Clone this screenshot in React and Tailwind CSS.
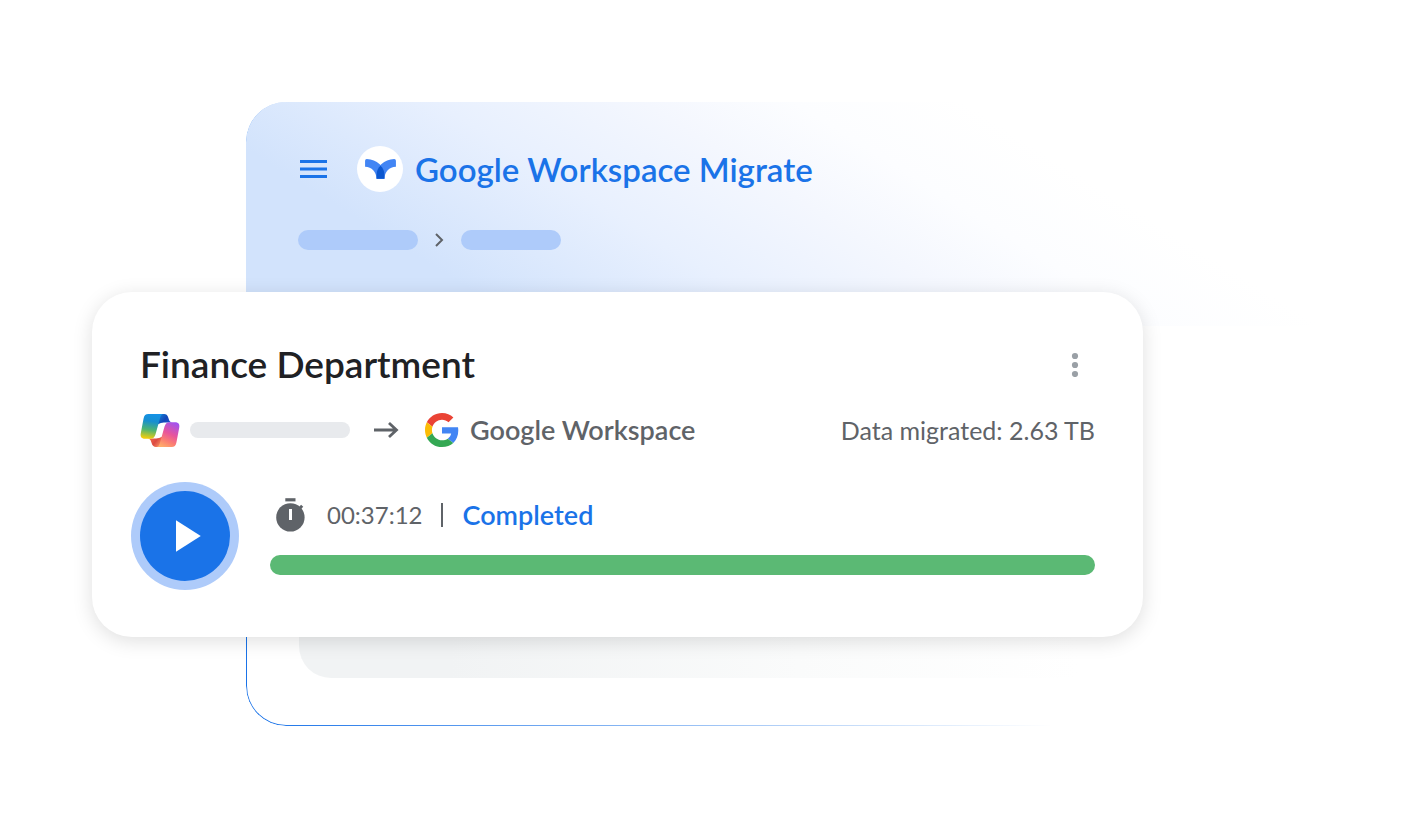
import React from "react";

const CopilotIcon = () => (
  <svg viewBox="32 39 116 102" className="w-10 h-[35px] shrink-0" role="img" aria-label="Copilot">
    <defs>
      <linearGradient id="leftRibbon" x1="0.55" y1="0" x2="0.4" y2="1">
        <stop offset="0" stopColor="#1592e6" />
        <stop offset="0.3" stopColor="#178fd0" />
        <stop offset="0.65" stopColor="#4fb570" />
        <stop offset="1" stopColor="#f2cd0c" />
      </linearGradient>
      <linearGradient id="leftFold" x1="0" y1="0" x2="1" y2="0.6">
        <stop offset="0" stopColor="#1784d8" />
        <stop offset="0.6" stopColor="#1247b8" />
        <stop offset="1" stopColor="#2052cb" />
      </linearGradient>
      <linearGradient id="rightRibbon" x1="0.75" y1="0" x2="0.3" y2="1">
        <stop offset="0" stopColor="#a253ee" />
        <stop offset="0.45" stopColor="#e8559c" />
        <stop offset="0.75" stopColor="#fb7f72" />
        <stop offset="1" stopColor="#ffab6b" />
      </linearGradient>
      <linearGradient id="rightFold" x1="0" y1="0" x2="1" y2="0.6">
        <stop offset="0" stopColor="#f9744e" />
        <stop offset="0.6" stopColor="#dc4a42" />
        <stop offset="1" stopColor="#f58a60" />
      </linearGradient>
    </defs>
    <path d="M84 42H102Q111 42 114 52L117 61Q119 66 125 67H104Q94 66 84 72Z" fill="url(#leftFold)" />
    <path d="M96 138H78Q69 138 66 128L63 119Q61 114 55 113H76Q86 114 96 108Z" fill="url(#rightFold)" />
    <path
      d="M56 42H100C94 42 91 50 89 58L77 101C74 110 70 114 62 114H46C36 114 32 108 34 98L42 56C44 46 48 42 56 42Z"
      fill="url(#leftRibbon)"
    />
    <path
      d="M124 138H80C86 138 89 130 91 122L103 79C106 70 110 66 118 66H134C144 66 148 72 146 82L138 124C136 134 132 138 124 138Z"
      fill="url(#rightRibbon)"
    />
  </svg>
);

const GoogleIcon = () => (
  <svg viewBox="0 0 48 48" className="size-[34px] shrink-0" role="img" aria-label="Google">
    <path fill="#EA4335" d="M24 9.5c3.54 0 6.71 1.22 9.21 3.6l6.85-6.85C35.9 2.38 30.47 0 24 0 14.62 0 6.51 5.38 2.56 13.22l7.98 6.19C12.43 13.72 17.74 9.5 24 9.5z" />
    <path fill="#4285F4" d="M46.98 24.55c0-1.57-.15-3.09-.38-4.55H24v9.02h12.94c-.58 2.96-2.26 5.48-4.78 7.18l7.73 6c4.51-4.18 7.09-10.36 7.09-17.65z" />
    <path fill="#FBBC05" d="M10.53 28.59c-.48-1.45-.76-2.99-.76-4.59s.27-3.14.76-4.59l-7.98-6.19C.92 16.46 0 20.12 0 24c0 3.88.92 7.54 2.56 10.78l7.97-6.19z" />
    <path fill="#34A853" d="M24 48c6.48 0 11.93-2.13 15.89-5.81l-7.73-6c-2.15 1.45-4.92 2.3-8.16 2.3-6.26 0-11.57-4.22-13.47-9.91l-7.98 6.19C6.51 42.62 14.62 48 24 48z" />
  </svg>
);

const MigrateLogo = () => (
  <span className="size-[46px] rounded-full bg-white flex items-center justify-center shrink-0">
    <svg viewBox="60 74 91 59" className="w-[31px] h-5" aria-hidden="true">
      <path d="M65 74Q60 74 60 79V97C80 98 93 112 94 132H117V118C117 96 95 76 65 74Z" fill="#4285f4" />
      <path d="M146 74Q151 74 151 79V97C131 98 118 112 117 132H94V118C94 96 116 76 146 74Z" fill="#4285f4" />
      <path d="M105.5 94C113 101 117 109 117 120V132H94V120C94 109 98 101 105.5 94Z" fill="#0b57d0" />
    </svg>
  </span>
);

const TimerIcon = () => (
  <svg viewBox="0 0 30 34" className="w-[30px] h-[34px] shrink-0" aria-hidden="true">
    <path d="M9.3 0.2h10.2v3.2H9.3z" fill="#5f6368" />
    <path d="M23 11l3.2-3.2" stroke="#5f6368" strokeWidth="3" />
    <circle cx="14.4" cy="19.4" r="14.2" fill="#5f6368" />
    <path d="M13 11h3v11h-3z" fill="#fff" />
  </svg>
);

const AppHeader = () => (
  <header className="relative h-56 rounded-tl-[40px] pl-[52px] pt-11 bg-[linear-gradient(32deg,#d2e3fc_0px,#d2e3fc_150px,#e8f0fe_290px,#f4f7fe_400px,#fcfdff_480px,#ffffff_570px)]">
    <div className="flex items-center">
      <button type="button" aria-label="Main menu" className="ml-0.5 mr-[30px]">
        <svg viewBox="0 0 27 20" className="w-[27px] h-5" aria-hidden="true">
          <path d="M0 2.5h27M0 10h27M0 17.5h27" stroke="#1a73e8" strokeWidth="3" />
        </svg>
      </button>
      <MigrateLogo />
      <h1 className="ml-3 text-[33px] leading-[44px] font-semibold text-[#1a73e8] whitespace-nowrap">
        Google Workspace Migrate
      </h1>
    </div>
    <div className="mt-[38px] flex items-center">
      <span className="w-[120px] h-5 rounded-full bg-[#aecbfa]" />
      <svg viewBox="0 0 11 14" className="w-[11px] h-3.5 mx-4" aria-hidden="true">
        <path d="M2 1L8 7L2 13" fill="none" stroke="#5f6368" strokeWidth="2" />
      </svg>
      <span className="w-[100px] h-5 rounded-full bg-[#aecbfa]" />
    </div>
  </header>
);

const AppWindow = () => (
  <section className="col-start-1 row-start-1 relative ml-[246px] flex flex-col">
    {/* outline that fades out to the right */}
    <div
      aria-hidden="true"
      className="absolute inset-0 rounded-l-[40px] border-l border-b border-[#1a73e8] [mask-image:linear-gradient(to_right,black,transparent_69%)]"
    />
    <AppHeader />
    <div className="relative flex-1 ml-[53px] mb-12 rounded-bl-[32px] bg-[linear-gradient(to_right,#f1f3f4_0px,#f1f3f4_150px,#fafbfb_500px,#ffffff_780px)]" />
  </section>
);

const MigrationCard = () => (
  <article className="col-start-1 row-start-1 relative ml-[92px] mr-[271px] mt-[190px] mb-[89px] px-12 pt-[50px] pb-14 rounded-[40px] bg-white shadow-[0_4px_20px_rgba(0,0,0,0.13)]">
    <div className="flex items-center justify-between">
      <h2 className="text-[37px] leading-[44px] font-semibold text-[#202124]">Finance Department</h2>
      <button type="button" aria-label="More options" className="mr-4">
        <svg viewBox="0 0 8 26" className="w-2 h-[26px]" aria-hidden="true">
          <circle cx="4" cy="5" r="3.1" fill="#9aa0a6" />
          <circle cx="4" cy="14" r="3.1" fill="#9aa0a6" />
          <circle cx="4" cy="23" r="3.1" fill="#9aa0a6" />
        </svg>
      </button>
    </div>

    <div className="mt-[26px] flex items-center text-[27px] leading-9 text-[#5f6368] whitespace-nowrap">
      <CopilotIcon />
      <span className="ml-2.5 w-40 h-4 rounded-full bg-[#e8eaed]" />
      <svg viewBox="0 0 26 18" className="w-[26px] h-[18px] ml-6 mr-[25px]" aria-hidden="true">
        <path d="M0 9h23M15 2l7.5 7l-7.5 7" fill="none" stroke="#5f6368" strokeWidth="2.8" />
      </svg>
      <GoogleIcon />
      <span className="ml-[11px] font-semibold">Google Workspace</span>
      <span className="ml-auto text-[25px]">Data migrated: 2.63 TB</span>
    </div>

    <div className="mt-[43px] flex items-center gap-10">
      <button
        type="button"
        aria-label="Start migration"
        className="size-[90px] shrink-0 rounded-full bg-[#1a73e8] ring-[9px] ring-[#aecbfa] flex items-center justify-center"
      >
        <svg viewBox="0 0 24 24" className="size-[54px]" aria-hidden="true">
          <path d="M8 5v14l11-7z" fill="#fff" />
        </svg>
      </button>
      <div className="flex-1">
        <div className="ml-1.5 flex items-center text-[27px] leading-9 text-[#5f6368] whitespace-nowrap">
          <TimerIcon />
          <span className="ml-[21px] text-[24px]">00:37:12</span>
          <span className="ml-[18px] mr-5 w-0.5 h-6 bg-[#5f6368]" />
          <span className="font-semibold text-[#1a73e8]">Completed</span>
        </div>
        <div
          role="progressbar"
          aria-label="Migration progress"
          aria-valuemin={0}
          aria-valuemax={100}
          aria-valuenow={100}
          className="mt-[22px] h-5 rounded-full bg-[#5bb974]"
        />
      </div>
    </div>
  </article>
);

const App = () => {
  return (
    <main className="min-h-screen bg-white pt-[102px] pb-24 font-['Google_Sans',Lato,sans-serif]">
      <div className="grid">
        <AppWindow />
        <MigrationCard />
      </div>
    </main>
  );
};

export default App;
